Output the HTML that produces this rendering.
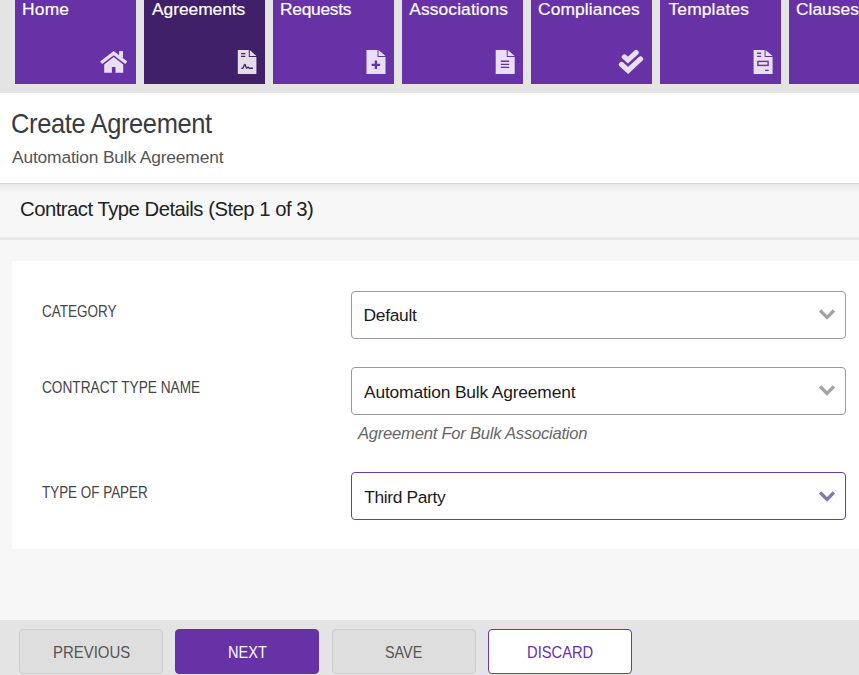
<!DOCTYPE html>
<html><head><meta charset="utf-8">
<style>
*{box-sizing:border-box;margin:0;padding:0}
html,body{width:859px;height:675px;overflow:hidden;background:#f7f7f7;font-family:"Liberation Sans",sans-serif}
.a{position:absolute}
.t{position:absolute;white-space:nowrap;line-height:1;transform-origin:0 0}
#topbar{left:0;top:0;width:859px;height:93px;background:#e4e4e4}
.tile{position:absolute;top:0;width:121px;height:84px;background:#6632a5}
.tile.on{background:#402068}
.tile .t{color:#fff;font-weight:400;font-size:17.4px;left:7px;top:1px;-webkit-text-stroke:0.2px #fff}
.tile svg{position:absolute}
#hdr{left:0;top:93px;width:859px;height:90px;background:#fff}
#div1{left:0;top:183px;width:859px;height:1px;background:#d2d5d8}
#shadow{left:0;top:184px;width:859px;height:9px;background:linear-gradient(#e8e8e8,#f7f7f7)}
#line2{left:0;top:237px;width:859px;height:3px;background:#e9e9e9}
#card{left:12px;top:261px;width:847px;height:288px;background:#fff}
.sel{position:absolute;left:351px;width:495px;height:48px;border:1px solid #9a9a9a;border-radius:4px;background:#fff}
.sel.p{border-color:#6a3aab}
.sel.p svg{top:18px}
.sel svg{position:absolute;left:467px;top:16.8px}
.lbl{color:#444;font-size:15.8px}
.val{color:#1a1a1a;font-size:17.4px}
#footer{left:0;top:620px;width:859px;height:55px;background:#e4e4e4}
.btn{position:absolute;top:629px;width:144px;height:45px;border:1px solid #cdcdcd;border-radius:4px;background:#dedede}
.btn.n{background:#6632a5;border-color:#6632a5}
.btn.d{background:#fff;border-color:#6a3aab}
.bt{font-size:17px;color:#555}
</style></head><body>
<div id="topbar" class="a"></div>
<div class="tile" style="left:15px"><div class="t" style="letter-spacing:0.2px">Home</div></div>
<div class="tile on" style="left:144px"><div class="t" style="left:8px;letter-spacing:-0.05px">Agreements</div></div>
<div class="tile" style="left:273px"><div class="t" style="letter-spacing:-0.28px">Requests</div></div>
<div class="tile" style="left:402px"><div class="t" style="left:7.3px;letter-spacing:0.1px">Associations</div></div>
<div class="tile" style="left:531px"><div class="t" style="letter-spacing:0.12px">Compliances</div></div>
<div class="tile" style="left:660px"><div class="t" style="left:8.5px;letter-spacing:0.15px">Templates</div></div>
<div class="tile" style="left:789px"><div class="t">Clauses</div></div>

<svg class="a" style="left:0;top:0" width="859" height="90" viewBox="0 0 859 90">
<g fill="#fff" fill-opacity="0.85">
<!-- agreements doc -->
<path d="M237.8 50h11v7h7.6v17h-18.6z M249.8 50l6.6 6h-6.6z"/>
<!-- requests doc -->
<path d="M366.5 50h11v7h8v17h-19z M378.5 50l7 6h-7z"/>
<!-- assoc doc -->
<path d="M495.7 50h11v7h8v17h-19z M507.7 50l7 6h-7z"/>
<!-- templates doc -->
<path d="M753.6 50h11v7h8v17h-19z M765.6 50l7 6h-7z"/>
</g>
<g stroke="#6632a5" fill="none">
<path d="M371.7 64.8h8.4 M375.9 60.6v8.4" stroke-width="2.3"/>
<path d="M500.8 61.3h8.4 M500.8 64.4h8.4 M500.8 67.4h8.4" stroke-width="1.4"/>
<path d="M757.1 53.3h4 M757.1 56.4h4 M765 70.4h3.8" stroke-width="1.4"/>
<rect x="757.9" y="61.4" width="10.2" height="4" stroke-width="1.4"/>
</g>
<g stroke="#402068" fill="none" stroke-width="1.4">
<path d="M241.1 53.6h4.2 M241.1 56.4h4.2"/>
<path d="M241.2 68.4 L242.6 68.3 C243.6 68.1 244 64.3 244.9 64.4 C245.7 64.5 245.9 68.3 246.7 68.2 C247.3 68.1 247.6 67.1 248.1 67.2 C248.6 67.3 248.8 68.3 249.5 68.3 L252.9 68.3"/>
</g>
<g stroke="#e8e0f1" fill="none" stroke-width="5.2" stroke-linejoin="miter" stroke-linecap="round">
<path d="M624.4 56.9 L627.9 60.1 L636.1 52.6"/>
<path d="M621.5 64.5 L628.1 70.4 L640.6 58.9"/>
</g>
<!-- home -->
<g fill="#e8e0f1">
<path d="M104.2 72.8V64.5L113.7 56.9L123.2 64.5V72.8H115.5V67H111.9V72.8Z"/>
<rect x="119.1" y="51.1" width="3.9" height="6.5"/>
</g>
<path d="M101.1 62.7L113.7 53.1L126.3 62.7" fill="none" stroke="#e8e0f1" stroke-width="3.3"/>
</svg>
<div id="hdr" class="a"></div>
<div id="div1" class="a"></div>
<div id="shadow" class="a"></div>
<div id="line2" class="a"></div>
<div id="card" class="a"></div>
<div id="footer" class="a"></div>

<div class="t" style="left:11px;top:109.5px;font-size:27.4px;letter-spacing:-0.4px;transform:scaleX(0.93);color:#383c42">Create Agreement</div>
<div class="t" style="left:12px;top:149px;font-size:17.4px;letter-spacing:-0.17px;color:#555">Automation Bulk Agreement</div>
<div class="t" style="left:20px;top:198.5px;font-size:20.3px;letter-spacing:-0.5px;color:#222">Contract Type Details (Step 1 of 3)</div>

<div class="t lbl" style="left:42px;top:303.5px;transform:scaleX(0.855)">CATEGORY</div>
<div class="t lbl" style="left:42px;top:379.5px;transform:scaleX(0.865)">CONTRACT TYPE NAME</div>
<div class="t lbl" style="left:42px;top:484.5px;transform:scaleX(0.85)">TYPE OF PAPER</div>

<div class="sel" style="top:291px"><svg width="16" height="11" viewBox="0 0 16 11"><path d="M1.1 1.4 L8 8.3 L14.9 1.4" fill="none" stroke="#a3a3a3" stroke-width="3.3"/></svg></div>
<div class="sel" style="top:367px"><svg width="16" height="11" viewBox="0 0 16 11"><path d="M1.1 1.4 L8 8.3 L14.9 1.4" fill="none" stroke="#a3a3a3" stroke-width="3.3"/></svg></div>
<div class="sel p" style="top:472px"><svg width="16" height="11" viewBox="0 0 16 11"><path d="M1.1 1.4 L8 8.3 L14.9 1.4" fill="none" stroke="#8874ad" stroke-width="3.3"/></svg></div>

<div class="t val" style="left:363.5px;top:307px;letter-spacing:-0.3px">Default</div>
<div class="t val" style="left:364px;top:384px;letter-spacing:-0.17px">Automation Bulk Agreement</div>
<div class="t val" style="left:364.2px;top:489px;letter-spacing:-0.35px">Third Party</div>
<div class="t" style="left:358px;top:425.5px;font-size:16.6px;letter-spacing:-0.24px;font-style:italic;color:#666">Agreement For Bulk Association</div>

<div class="btn" style="left:19px"></div>
<div class="btn n" style="left:175px"></div>
<div class="btn" style="left:332px"></div>
<div class="btn d" style="left:488px"></div>
<div class="t bt" style="left:53px;top:644px;transform:scaleX(0.879)">PREVIOUS</div>
<div class="t bt" style="left:227.5px;top:644px;color:#fff;transform:scaleX(0.856)">NEXT</div>
<div class="t bt" style="left:385px;top:644px;transform:scaleX(0.844)">SAVE</div>
<div class="t bt" style="left:527px;top:644px;color:#6632a5;transform:scaleX(0.866)">DISCARD</div>
</body></html>
